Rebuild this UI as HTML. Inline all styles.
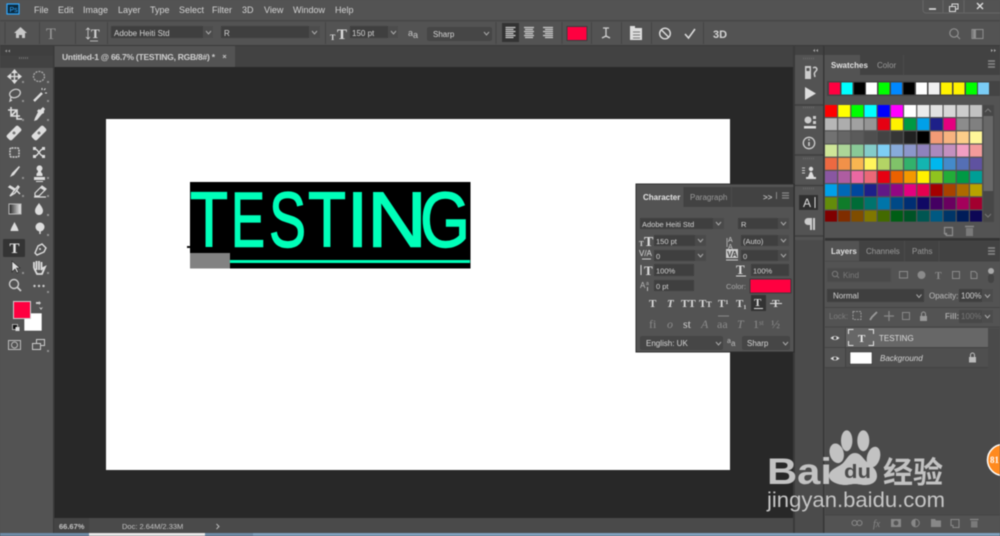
<!DOCTYPE html>
<html><head><meta charset="utf-8"><style>
html,body{margin:0;padding:0;background:#535353;width:1000px;height:536px;overflow:hidden}
svg{display:block;filter:blur(.5px)}
text{font-family:"Liberation Sans","Noto Sans CJK SC",sans-serif;font-size:8.5px;fill:#d4d4d4}
.f{fill:#3f3f3f}.i{fill:#cfcfcf}.s{stroke:#cfcfcf;fill:none;stroke-width:1.3}
.d{stroke:#aaa;fill:none;stroke-width:1}
.t{font-family:"Liberation Serif",serif;font-size:11px;font-weight:bold;fill:#ddd}
.g{font-family:"Liberation Serif",serif;font-size:12px;fill:#8a8a8a}
.big{font-size:78px;fill:#00ffb9;stroke:#00ffb9;stroke-width:1.4}
</style></head><body>
<svg width="1000" height="536" viewBox="0 0 1000 536" xmlns="http://www.w3.org/2000/svg">
<rect width="1000" height="536" fill="#535353"/>
<!-- menu -->
<rect x="7" y="4" width="12" height="10" fill="#0b2a3f" stroke="#31a8ff" stroke-width="1.2"/>
<text x="9.5" y="12" style="font-size:7px;fill:#31a8ff">Ps</text>
<text x="34" y="13" style="font-size:9px">File</text>
<text x="58" y="13" style="font-size:9px">Edit</text>
<text x="83" y="13" style="font-size:9px">Image</text>
<text x="118" y="13" style="font-size:9px">Layer</text>
<text x="150" y="13" style="font-size:9px">Type</text>
<text x="179" y="13" style="font-size:9px">Select</text>
<text x="212" y="13" style="font-size:9px">Filter</text>
<text x="242" y="13" style="font-size:9px">3D</text>
<text x="264" y="13" style="font-size:9px">View</text>
<text x="293" y="13" style="font-size:9px">Window</text>
<text x="335" y="13" style="font-size:9px">Help</text>
<path d="M923 0V10a3 3 0 0 0 3 3H1000" fill="none" stroke="#666"/><path d="M943 0V13M964 0V13" stroke="#666"/>
<path d="M929 9h7" stroke="#ddd" stroke-width="1.6"/>
<rect x="949.5" y="6.5" width="6" height="5" fill="none" stroke="#ddd"/><path d="M952 6V4h6v5h-2" fill="none" stroke="#ddd"/>
<path d="M977 3l6 6M983 3l-6 6" stroke="#ddd" stroke-width="1.4"/>
<!-- options -->
<rect y="20" width="1000" height="1.5" fill="#474747"/>
<rect y="45" width="1000" height="1.5" fill="#3a3a3a"/>
<path d="M5 22v22M39.5 22v22M75.5 22v22M107.5 22v22M325.5 22v22M496 22v22M562 22v22M591.5 22v22M621.5 22v22M651.5 22v22M703.5 22v22" stroke="#444"/>
<path d="M14 33l6.5-6 6.5 6h-2v5h-3v-3h-3v3h-3v-5z" fill="#c8c8c8"/>
<text x="46" y="39" style="font-family:'Liberation Serif';font-size:16px;fill:#999">T</text>
<text x="91" y="38" style="font-family:'Liberation Serif';font-size:13px;font-weight:bold;fill:#d4d4d4">T</text><path d="M88 28v11M86 30l2-2 2 2M86 37l2 2 2-2M90 41h8" stroke="#d4d4d4" fill="none" stroke-width=".8"/>
<rect x="111" y="26" width="102" height="12" rx="1" class="f"/><rect x="203" y="26" width="10" height="12" fill="#4c4c4c"/>
<text x="114" y="36" style="font-size:8px">Adobe Heiti Std</text><path d="M206 31l2.5 3 2.5-3" class="d"/>
<rect x="221" y="26" width="88" height="12" class="f"/><rect x="309" y="26" width="11" height="12" fill="#4c4c4c"/><text x="224" y="36" style="font-size:8px">R</text><path d="M312 31l2.5 3 2.5-3" class="d"/>
<text x="337" y="39" style="font-family:'Liberation Serif';font-size:15px;font-weight:bold;fill:#ddd">T</text><text x="330" y="40" style="font-family:'Liberation Serif';font-size:8px;font-weight:bold;fill:#ddd">T</text>
<rect x="350" y="26" width="38" height="12" class="f"/><rect x="388" y="26" width="10" height="12" fill="#4c4c4c"/><text x="352" y="36" style="font-size:8px">150 pt</text><path d="M391 31l2.5 3 2.5-3" class="d"/>
<text x="408" y="36" style="font-size:9px;fill:#c4c4c4">a</text><text x="413" y="38" style="font-size:9px;fill:#c4c4c4">a</text>
<rect x="427" y="27" width="65" height="14" rx="2" fill="#464646"/><text x="433" y="37" style="font-size:8px">Sharp</text><path d="M484 32l2.5 3 2.5-3" class="d"/>
<rect x="502" y="23" width="17" height="19" fill="#333"/>
<path d="M505.5 27.5h10M505.5 29.5h8M505.5 31.5h10M505.5 33.5h8M505.5 35.5h10M505.5 37.5h8" stroke="#ccc" stroke-width="1.2"/>
<path d="M524 27.5h10M525 29.5h8M524 31.5h10M525 33.5h8M524 35.5h10M525 37.5h8" stroke="#ccc" stroke-width="1.2"/>
<path d="M543 27.5h10M545 29.5h8M543 31.5h10M545 33.5h8M543 35.5h10M545 37.5h8" stroke="#ccc" stroke-width="1.2"/>
<rect x="567" y="26.5" width="20" height="14" fill="#ff0040" stroke="#3d3d3d"/>
<path d="M603 28h6M606 28v9M602 38l4-2 4 2" class="s"/>
<rect x="630" y="28" width="12" height="12" fill="#ddd"/><rect x="630" y="26" width="5" height="3" fill="#ddd"/><path d="M633 32h7M633 35h7M633 38h7" stroke="#777"/>
<circle cx="665" cy="33.5" r="5.3" fill="none" stroke="#ddd" stroke-width="1.4"/><path d="M661.5 30l7 7" stroke="#ddd" stroke-width="1.4"/>
<path d="M685 34l3.5 4 6.5-9" fill="none" stroke="#ddd" stroke-width="1.5"/>
<text x="713" y="38" style="font-size:11px;font-weight:bold;fill:#d4d4d4">3D</text>
<circle cx="954" cy="33" r="4.2" fill="none" stroke="#8f8f8f" stroke-width="1.2"/><path d="M957 36l3 3" stroke="#8f8f8f" stroke-width="1.2"/>
<rect x="972" y="29.5" width="11" height="9" fill="none" stroke="#8f8f8f"/><rect x="973" y="30" width="3" height="8" fill="#8f8f8f"/>
<!-- tab row -->
<rect y="46" width="793" height="22" fill="#424242"/>
<rect x="54" y="46" width="181" height="22" fill="#535353"/>
<text x="62" y="60" style="font-size:8.5px;font-weight:bold;fill:#d0d0d0" textLength="153">Untitled-1 @ 66.7% (TESTING, RGB/8#) *</text>
<path d="M223 55l3 3M226 55l-3 3" stroke="#bbb"/>
<!-- canvas -->
<rect x="54" y="67" width="739" height="451" fill="#282828"/>
<rect x="106" y="119" width="624" height="351" fill="#fff"/>
<rect x="190" y="182" width="280.5" height="86.5" fill="#000"/>
<text class="big" x="190" y="246.5" textLength="38" lengthAdjust="spacingAndGlyphs">T</text>
<text class="big" x="231" y="246.5" textLength="34" lengthAdjust="spacingAndGlyphs">E</text>
<text class="big" x="269" y="246.5" textLength="37" lengthAdjust="spacingAndGlyphs">S</text>
<text class="big" x="308" y="246.5" textLength="38" lengthAdjust="spacingAndGlyphs">T</text>
<text class="big" x="346.5" y="246.5" textLength="22" lengthAdjust="spacingAndGlyphs">I</text>
<text class="big" x="367" y="246.5" textLength="60" lengthAdjust="spacingAndGlyphs">N</text>
<text class="big" x="420" y="246.5" textLength="50" lengthAdjust="spacingAndGlyphs">G</text>
<rect x="190" y="253" width="40" height="15.5" fill="#828282"/>
<rect x="230" y="260" width="240" height="3" fill="#00ffb9"/>
<rect x="187" y="246" width="3" height="2" fill="#111"/>
<!-- left toolbar -->
<rect width="54" height="9.5" y="46" fill="#3f3f3f"/><rect x="53" y="46" width="1.5" height="490" fill="#3a3a3a"/>
<path d="M5 51l2-1.5v3zM8 51l2-1.5v3z" fill="#999"/>
<path d="M19 58h10" stroke="#6d6d6d" stroke-width="2" stroke-dasharray="1 1"/>
<g fill="#8f8f8f"><path d="M22 81h2v2h-2zM47 81h2v2h-2zM22 100h2v2h-2zM47 100h2v2h-2zM22 119h2v2h-2zM47 119h2v2h-2zM22 177h2v2h-2zM47 177h2v2h-2zM22 195h2v2h-2zM47 195h2v2h-2zM47 214h2v2h-2zM47 234h2v2h-2zM22 253h2v2h-2zM22 272h2v2h-2zM47 272h2v2h-2zM47 291h2v2h-2zM47 350h2v2h-2z"/></g>
<!-- row 1 -->
<path d="M14.5 71v11M9 76.5h11M14.5 70l-2 2.5h4zM14.5 83l-2-2.5h4zM8 76.5l2.5-2v4zM21 76.5l-2.5-2v4z" fill="#ddd" stroke="#ddd" stroke-width="1.3"/>
<ellipse cx="39" cy="76.5" rx="5.5" ry="5" fill="none" stroke="#aaa" stroke-width="1.3" stroke-dasharray="2 1"/>
<ellipse cx="15" cy="93.5" rx="5.5" ry="4" fill="none" stroke="#ccc" stroke-width="1.3" transform="rotate(-20 15 93.5)"/><path d="M11 97l-1 4 2-1" class="s"/>
<path d="M34 101l8-8" stroke="#ddd" stroke-width="2.4"/><path d="M42 88v2M45 93h2M44 90l1.5-1.5" stroke="#ddd"/>
<path d="M8 110h9v9h5M11 107v9h9M17 110l-6 6" fill="none" stroke="#ddd" stroke-width="1.6"/>
<path d="M35 118l-1 3 3-1 5-6 2-1v-2l1-2-2-2-3 3-1-1-2 2 1 1z" fill="#ddd"/>
<g transform="rotate(-45 14 133)"><rect x="6" y="129.5" width="16" height="7" rx="2" fill="#ddd"/><circle cx="14" cy="133" r="1.5" fill="#777"/></g>
<g transform="rotate(-45 39 133)"><rect x="31" y="129.5" width="16" height="7" rx="2" fill="#ddd"/><circle cx="39" cy="133" r="1.5" fill="#777"/></g>
<rect x="10" y="148" width="9" height="9" rx="1.5" fill="#555" stroke="#ccc" stroke-width="1.5" stroke-dasharray="2 .8"/>
<path d="M34 148l3 2 4 5 3 2M44 148l-3 2-4 5-3 2" fill="none" stroke="#ddd" stroke-width="1.4"/><rect x="33" y="147" width="3" height="3" fill="#ddd"/><rect x="42" y="147" width="3" height="3" fill="#ddd"/><rect x="33" y="155" width="3" height="3" fill="#ddd"/><rect x="42" y="155" width="3" height="3" fill="#ddd"/>
<path d="M10 177l2-4 7-7 1 1-6 8z" fill="#ddd"/>
<path d="M36.5 176v-2c0-1 1.5-1 1.5-3a3 3 0 1 1 3 0c0 2 1.5 2 1.5 3v2zM34 177h11v3H34zM36 181h7v1h-7z" fill="#ddd"/>
<path d="M10 196l3-4 5-6 1 1-4 6zM9 187l5 3 1-1-5-3zM17 191l3 3" fill="none" stroke="#ddd" stroke-width="1.4"/>
<path d="M35 193l7-7 4 3-7 7h-4zM34 197h12" fill="none" stroke="#ddd" stroke-width="1.2"/><path d="M40 188l5 3 1.5-2-4-3z" fill="#ddd"/>
<defs><linearGradient id="gr"><stop offset="0" stop-color="#222"/><stop offset="1" stop-color="#eee"/></linearGradient></defs>
<rect x="9" y="204" width="12" height="10" fill="url(#gr)" stroke="#bbb"/>
<path d="M39 203c2 3 4 5 4 8a4 4 0 0 1-8 0c0-3 2-5 4-8z" fill="#ddd"/>
<path d="M14.5 222c1 2 4 7 4 9h-8c0-2 3-7 4-9z" fill="#ddd"/>
<circle cx="40" cy="227" r="4.5" fill="#ddd"/><path d="M40 231v3" stroke="#ddd" stroke-width="1.5"/>
<rect x="3" y="239" width="22" height="18" rx="1" fill="#343434"/>
<text x="9.5" y="253" style="font-family:'Liberation Serif';font-size:15px;font-weight:bold;fill:#e4e4e4">T</text>
<path d="M35 253l3-7 4-2 4 4-2 4-7 3z" fill="none" stroke="#ddd" stroke-width="1.4"/><circle cx="40" cy="249" r="1" fill="#ddd"/>
<path d="M12 261l0 11 3-3 2 4 1.5-1-2-4h3.5z" fill="#ddd" stroke="#222" stroke-width=".6"/>
<path d="M34 268v-6M36.5 270v-9M39 270v-9M41.5 270v-8M34 268l3 6h5l3-7-2 1-2 2" fill="none" stroke="#ddd" stroke-width="1.8"/>
<circle cx="14" cy="284" r="4.5" fill="none" stroke="#ccc" stroke-width="1.4"/><path d="M17 287l4 4" stroke="#ccc" stroke-width="1.8"/>
<circle cx="34.5" cy="286" r="1.2" fill="#ccc"/><circle cx="39" cy="286" r="1.2" fill="#ccc"/><circle cx="43.5" cy="286" r="1.2" fill="#ccc"/>
<rect x="24" y="313" width="18" height="18" fill="#fff" stroke="#3a3a3a" stroke-width=".5"/>
<rect x="13.5" y="301.5" width="17" height="17" fill="#ff0040" stroke="#cfcfcf"/>
<path d="M36 302h3v-1l2 2-2 2v-1h-3zM41 304v4l2-1-2 3-2-3 2 1" fill="#ccc"/>
<rect x="12.5" y="324.5" width="5" height="5" fill="#111" stroke="#ddd" stroke-width=".7"/><rect x="15.5" y="327" width="4" height="4" fill="#ddd"/>
<rect x="8.5" y="340.5" width="12" height="9" fill="none" stroke="#bbb"/><circle cx="14.5" cy="345" r="3" fill="none" stroke="#bbb"/>
<rect x="36.5" y="339.5" width="8" height="6" fill="none" stroke="#ccc"/><rect x="32.5" y="343.5" width="8" height="6" fill="#555" stroke="#ccc"/>
<!-- status -->
<rect x="54" y="518" width="739" height="15" fill="#4a4a4a"/>
<rect y="518" width="35" height="15" fill="#444" x="54"/>
<text x="59" y="529" style="font-size:7.5px;font-weight:bold;fill:#c4c4c4">66.67%</text>
<text x="122" y="529" style="font-size:7.5px;fill:#c4c4c4">Doc: 2.64M/2.33M</text>
<path d="M216.5 524l2.5 2.5-2.5 2.5" fill="none" stroke="#bbb"/>
<rect y="533" width="1000" height="3" fill="#6d8aa5"/><rect x="89" y="533" width="116" height="3" fill="#e8e8e8"/><rect x="253" y="533" width="747" height="3" fill="#7fa0bd"/>
<!-- dock -->
<rect x="793" y="46" width="2" height="487" fill="#3a3a3a"/>
<rect x="795" y="46" width="28" height="9" fill="#424242"/><rect x="823" y="46" width="1.5" height="487" fill="#373737"/><rect x="824.5" y="46" width="175.5" height="9" fill="#424242"/>
<path d="M813 50.5l2-1.5v3zM816 50.5l2-1.5v3zM991 49v3l2-1.5zM994 49v3l2-1.5z" fill="#aaa"/>
<path d="M803 58.5h12M803 107.5h12M803 158.5h12M803 188.5h12" stroke="#666" stroke-width="2" stroke-dasharray="1 1"/>
<path d="M795 105h28M795 155h28M795 185.5h28M795 236h28" stroke="#3b3b3b" stroke-width="1.3"/>
<rect x="805" y="66" width="6" height="13" fill="#ccc"/><rect x="806.5" y="68" width="3" height="3" fill="#555"/><path d="M813 68c3-2 5 1 3 3s-2 2-1 6" fill="none" stroke="#ccc" stroke-width="1.5"/>
<path d="M805 87l11 6.5-11 6.5z" fill="#ddd"/>
<circle cx="808" cy="120" r="3.5" fill="#ccc"/><rect x="813" y="116" width="3" height="3" fill="#ccc"/><rect x="813" y="121" width="3" height="3" fill="#ccc"/><rect x="804" y="126" width="12" height="2.5" fill="#ddd"/>
<circle cx="809" cy="143" r="5.7" fill="none" stroke="#ccc" stroke-width="1.3"/><path d="M809 142v4" stroke="#ccc" stroke-width="1.6"/><circle cx="809" cy="139.8" r=".9" fill="#ccc"/>
<path d="M802 168h3M802 170.5h3M802 173h3" stroke="#ccc"/><circle cx="811" cy="169" r="2.2" fill="#ddd"/><path d="M808 177l2-5h2l2 5zM806 177h10v2h-10z" fill="#ddd"/>
<rect x="799" y="195" width="19" height="15" fill="#303030"/><text x="803" y="207" style="font-size:12px;fill:#ddd">A</text><path d="M815 197v11" stroke="#ddd"/>
<path d="M812 218h-4a3.5 3.5 0 0 0 0 7h2v5h2v-12zM813 218h2v12h-2z" fill="#ccc"/>
<!-- swatches -->
<rect x="825" y="55" width="175" height="20" fill="#424242"/><rect x="825" y="55" width="35" height="20" fill="#535353"/><path d="M903.5 55v20" stroke="#4a4a4a"/>
<text x="831" y="68" style="font-size:8px;font-weight:bold;fill:#e2e2e2">Swatches</text><text x="877" y="68" style="font-size:8px;fill:#9a9a9a">Color</text>
<path d="M988 61h7M988 64h7M988 67h7" stroke="#888" stroke-width="1.5"/>
<rect x="827" y="81" width="173" height="15" fill="#444"/>
<g>
<rect x="829" y="82.5" width="11" height="12" fill="#ff0040"/><rect x="841.5" y="82.5" width="11" height="12" fill="#00ffff"/><rect x="854" y="82.5" width="11" height="12" fill="#000"/><rect x="866" y="82.5" width="11" height="12" fill="#fff"/><rect x="878.5" y="82.5" width="11" height="12" fill="#00ff00"/><rect x="891" y="82.5" width="11" height="12" fill="#0088ff"/><rect x="903.5" y="82.5" width="11" height="12" fill="#000"/><rect x="916" y="82.5" width="11" height="12" fill="#fff"/><rect x="928.5" y="82.5" width="11" height="12" fill="#f0f0f0"/><rect x="941" y="82.5" width="11" height="12" fill="#fff200"/><rect x="953.5" y="82.5" width="11" height="12" fill="#fff200"/><rect x="966" y="82.5" width="11" height="12" fill="#00ff00"/><rect x="978" y="82.5" width="11" height="12" fill="#7accf5"/>
</g>
<g transform="translate(825 105)"><rect x="0" width="12" height="12" fill="#ff0000"/><rect x="13.2" width="12" height="12" fill="#ffff00"/><rect x="26.4" width="12" height="12" fill="#00ff00"/><rect x="39.5" width="12" height="12" fill="#00ffff"/><rect x="52.7" width="12" height="12" fill="#0000ff"/><rect x="65.9" width="12" height="12" fill="#ff00ff"/><rect x="79.1" width="12" height="12" fill="#ffffff"/><rect x="92.3" width="12" height="12" fill="#ebebeb"/><rect x="105.5" width="12" height="12" fill="#e1e1e1"/><rect x="118.6" width="12" height="12" fill="#d7d7d7"/><rect x="131.8" width="12" height="12" fill="#cccccc"/><rect x="145" width="12" height="12" fill="#c2c2c2"/></g>
<g transform="translate(825 118.2)"><rect x="0" width="12" height="12" fill="#b7b7b7"/><rect x="13.2" width="12" height="12" fill="#adadad"/><rect x="26.4" width="12" height="12" fill="#a1a1a1"/><rect x="39.5" width="12" height="12" fill="#959595"/><rect x="52.7" width="12" height="12" fill="#e60012"/><rect x="65.9" width="12" height="12" fill="#fff100"/><rect x="79.1" width="12" height="12" fill="#009944"/><rect x="92.3" width="12" height="12" fill="#00a0e9"/><rect x="105.5" width="12" height="12" fill="#1d2088"/><rect x="118.6" width="12" height="12" fill="#e5007f"/><rect x="131.8" width="12" height="12" fill="#8c8c8c"/><rect x="145" width="12" height="12" fill="#808080"/></g>
<g transform="translate(825 131.4)"><rect x="0" width="12" height="12" fill="#727272"/><rect x="13.2" width="12" height="12" fill="#666666"/><rect x="26.4" width="12" height="12" fill="#5b5b5b"/><rect x="39.5" width="12" height="12" fill="#4f4f4f"/><rect x="52.7" width="12" height="12" fill="#434343"/><rect x="65.9" width="12" height="12" fill="#363636"/><rect x="79.1" width="12" height="12" fill="#212121"/><rect x="92.3" width="12" height="12" fill="#000000"/><rect x="105.5" width="12" height="12" fill="#f29b76"/><rect x="118.6" width="12" height="12" fill="#f7b37f"/><rect x="131.8" width="12" height="12" fill="#fbcd89"/><rect x="145" width="12" height="12" fill="#fff799"/></g>
<g transform="translate(825 144.6)"><rect x="0" width="12" height="12" fill="#cfe698"/><rect x="13.2" width="12" height="12" fill="#acd598"/><rect x="26.4" width="12" height="12" fill="#89c997"/><rect x="39.5" width="12" height="12" fill="#84ccc9"/><rect x="52.7" width="12" height="12" fill="#7ecef4"/><rect x="65.9" width="12" height="12" fill="#88abda"/><rect x="79.1" width="12" height="12" fill="#8c97cb"/><rect x="92.3" width="12" height="12" fill="#8f82bc"/><rect x="105.5" width="12" height="12" fill="#aa89bd"/><rect x="118.6" width="12" height="12" fill="#c490bf"/><rect x="131.8" width="12" height="12" fill="#f19ec2"/><rect x="145" width="12" height="12" fill="#f29b9b"/></g>
<g transform="translate(825 157.8)"><rect x="0" width="12" height="12" fill="#ec6941"/><rect x="13.2" width="12" height="12" fill="#f19149"/><rect x="26.4" width="12" height="12" fill="#f8b551"/><rect x="39.5" width="12" height="12" fill="#fff45c"/><rect x="52.7" width="12" height="12" fill="#b3d465"/><rect x="65.9" width="12" height="12" fill="#80c269"/><rect x="79.1" width="12" height="12" fill="#32b16c"/><rect x="92.3" width="12" height="12" fill="#13b5b1"/><rect x="105.5" width="12" height="12" fill="#00b7ee"/><rect x="118.6" width="12" height="12" fill="#448aca"/><rect x="131.8" width="12" height="12" fill="#556fb5"/><rect x="145" width="12" height="12" fill="#5f52a0"/></g>
<g transform="translate(825 171)"><rect x="0" width="12" height="12" fill="#8957a1"/><rect x="13.2" width="12" height="12" fill="#ae5da1"/><rect x="26.4" width="12" height="12" fill="#ea68a2"/><rect x="39.5" width="12" height="12" fill="#eb6877"/><rect x="52.7" width="12" height="12" fill="#e60012"/><rect x="65.9" width="12" height="12" fill="#eb6100"/><rect x="79.1" width="12" height="12" fill="#f39800"/><rect x="92.3" width="12" height="12" fill="#fff100"/><rect x="105.5" width="12" height="12" fill="#8fc31f"/><rect x="118.6" width="12" height="12" fill="#22ac38"/><rect x="131.8" width="12" height="12" fill="#009944"/><rect x="145" width="12" height="12" fill="#009e96"/></g>
<g transform="translate(825 184.2)"><rect x="0" width="12" height="12" fill="#00a0e9"/><rect x="13.2" width="12" height="12" fill="#0068b7"/><rect x="26.4" width="12" height="12" fill="#00479d"/><rect x="39.5" width="12" height="12" fill="#1d2088"/><rect x="52.7" width="12" height="12" fill="#601986"/><rect x="65.9" width="12" height="12" fill="#920783"/><rect x="79.1" width="12" height="12" fill="#e4007f"/><rect x="92.3" width="12" height="12" fill="#e5004f"/><rect x="105.5" width="12" height="12" fill="#a40000"/><rect x="118.6" width="12" height="12" fill="#a84200"/><rect x="131.8" width="12" height="12" fill="#ad6a00"/><rect x="145" width="12" height="12" fill="#b8a200"/></g>
<g transform="translate(825 197.4)"><rect x="0" width="12" height="12" fill="#638c0b"/><rect x="13.2" width="12" height="12" fill="#0f7c2a"/><rect x="26.4" width="12" height="12" fill="#006b37"/><rect x="39.5" width="12" height="12" fill="#00736d"/><rect x="52.7" width="12" height="12" fill="#0075a9"/><rect x="65.9" width="12" height="12" fill="#004986"/><rect x="79.1" width="12" height="12" fill="#002e73"/><rect x="92.3" width="12" height="12" fill="#100964"/><rect x="105.5" width="12" height="12" fill="#440062"/><rect x="118.6" width="12" height="12" fill="#6a005f"/><rect x="131.8" width="12" height="12" fill="#a4005b"/><rect x="145" width="12" height="12" fill="#a2002f"/></g>
<g transform="translate(825 210.6)"><rect x="0" width="12" height="11" fill="#7f0000"/><rect x="13.2" width="12" height="11" fill="#7f2d00"/><rect x="26.4" width="12" height="11" fill="#7f4d00"/><rect x="39.5" width="12" height="11" fill="#807700"/><rect x="52.7" width="12" height="11" fill="#436a00"/><rect x="65.9" width="12" height="11" fill="#005e15"/><rect x="79.1" width="12" height="11" fill="#005326"/><rect x="92.3" width="12" height="11" fill="#005652"/><rect x="105.5" width="12" height="11" fill="#005982"/><rect x="118.6" width="12" height="11" fill="#003567"/><rect x="131.8" width="12" height="11" fill="#001c58"/><rect x="145" width="12" height="11" fill="#0d0755"/></g>
<rect x="983" y="105" width="11" height="117" fill="#474747"/><rect x="983.5" y="116" width="9.5" height="75" fill="#686868"/>
<path d="M985 112l3-3 3 3M985 214l3 3 3-3" fill="none" stroke="#777"/>
<path d="M944.5 227.5h8v8h-6v-2h-2zM946 235l-2-2" fill="none" stroke="#8d8d8d" stroke-width="1.2"/>
<rect x="966" y="228" width="7" height="8" fill="#7a7a7a"/><path d="M965 226.5h9" stroke="#888" stroke-width="1.5"/>
<rect x="825" y="238" width="175" height="2.5" fill="#333"/>
<!-- layers -->
<rect x="825" y="240.5" width="175" height="21" fill="#424242"/><rect x="825" y="241" width="34" height="20" fill="#535353"/><path d="M904.5 241v20M939 241v20" stroke="#4a4a4a"/>
<text x="831" y="254" style="font-size:8px;font-weight:bold;fill:#e2e2e2">Layers</text><text x="866" y="254" style="font-size:8px;fill:#9a9a9a">Channels</text><text x="912" y="254" style="font-size:8px;fill:#9a9a9a">Paths</text>
<path d="M988 248h7M988 251h7M988 254h7" stroke="#888" stroke-width="1.5"/>
<rect x="827" y="268" width="64" height="14" rx="1" fill="#4a4a4a" stroke="#505050"/>
<circle cx="835" cy="274" r="2.7" fill="none" stroke="#7a7a7a"/><path d="M837 276l2 2" stroke="#7a7a7a"/>
<text x="843" y="278" style="font-size:8px;fill:#7a7a7a">Kind</text>
<g fill="none" stroke="#8a8a8a"><rect x="899.5" y="271.5" width="8" height="6.5"/><circle cx="921.5" cy="275" r="3.5" fill="#8a8a8a"/><rect x="952.5" y="271.5" width="7" height="7"/><path d="M971 271.5h4l2 2v5h-6z"/></g>
<text x="935" y="279" style="font-family:'Liberation Serif';font-size:10px;font-weight:bold;fill:#8a8a8a">T</text>
<circle cx="991" cy="271" r="3" fill="#a8a8a8"/><rect x="988" y="274" width="6" height="9" rx="3" fill="#444"/>
<rect x="827" y="289" width="97" height="13" fill="#3f3f3f"/><text x="833" y="298.5" style="font-size:8px">Normal</text><path d="M916.5 294.5l2.5 3 2.5-3" class="d"/>
<text x="929" y="298.5" style="font-size:8px;fill:#bdbdbd">Opacity:</text>
<rect x="959" y="289" width="23" height="13" fill="#3f3f3f"/><rect x="982" y="289" width="11" height="13" fill="#4c4c4c"/><text x="961" y="298.5" style="font-size:8px">100%</text><path d="M985 294.5l2.5 3 2.5-3" class="d"/>
<path d="M825 307.5h175M825 327h175" stroke="#444"/>
<text x="829" y="319" style="font-size:8px;fill:#7c7c7c">Lock:</text>
<rect x="853" y="311.5" width="8" height="8" fill="none" stroke="#999" stroke-dasharray="2 1"/>
<path d="M870 320l2-3 5-5" stroke="#999" stroke-width="1.8" fill="none"/>
<path d="M889 311v10M884 316h10" stroke="#888" stroke-width="1.3"/>
<rect x="902.5" y="312.5" width="7" height="7" fill="none" stroke="#888"/><rect x="920" y="316" width="7" height="5" fill="#999"/><path d="M921.5 316v-2a2 2 0 0 1 4 0v2" fill="none" stroke="#999"/>
<text x="945" y="319" style="font-size:8px;font-weight:bold;fill:#a8a8a8">Fill:</text>
<rect x="959" y="310" width="23" height="13" fill="#484848"/><rect x="982" y="310" width="11" height="13" fill="#4c4c4c"/><text x="961" y="319" style="font-size:8px;fill:#777">100%</text><path d="M985 315l2.5 3 2.5-3" class="d"/>
<rect x="846" y="328" width="142" height="19" fill="#676767"/>
<rect x="846" y="348" width="142" height="19" fill="#4f4f4f"/>
<path d="M825 347.5h163M825 367.5h163" stroke="#434343"/><path d="M845.5 328v39" stroke="#434343"/><rect x="988" y="328" width="12" height="187" fill="#4a4a4a"/>
<path d="M830.5 338q4.5-4 9 0q-4.5 4-9 0z" fill="#ddd"/><circle cx="835" cy="338" r="1.5" fill="#444"/>
<path d="M830.5 358.5q4.5-4 9 0q-4.5 4-9 0z" fill="#ddd"/><circle cx="835" cy="358.5" r="1.5" fill="#444"/>
<path d="M848.5 334v-4.5h5M868.5 329.5h5v4.5M873.5 341v4.5h-5M853.5 345.5h-5v-4.5" fill="none" stroke="#e6e6e6"/>
<text x="858" y="342" style="font-family:'Liberation Serif';font-size:11px;font-weight:bold;fill:#eee">T</text>
<text x="879" y="341" style="font-size:8px;fill:#dcdcdc">TESTING</text>
<rect x="850" y="352" width="22" height="12" fill="#fff" stroke="#222" stroke-width=".5"/>
<text x="880" y="361" style="font-size:8px;font-style:italic;fill:#d4d4d4">Background</text>
<rect x="969" y="357" width="7" height="5.5" fill="#bbb"/><path d="M970.5 357v-2a2 2 0 0 1 4 0v2" fill="none" stroke="#bbb"/>
<rect x="825" y="368" width="175" height="147" fill="#4a4a4a"/><rect x="795" y="240" width="28" height="293" fill="#4b4b4b"/>
<rect x="825" y="515" width="175" height="17.5" fill="#535353"/><path d="M825 515h175" stroke="#444"/>
<g fill="none" stroke="#888" stroke-width="1.1"><circle cx="854.5" cy="523" r="2.5"/><circle cx="859.5" cy="523" r="2.5"/><path d="M951 519.5h8v8h-6v-2h-2z"/></g>
<text x="873" y="527" style="font-family:'Liberation Serif';font-size:10px;font-style:italic;fill:#888">fx</text>
<rect x="891" y="519" width="10" height="8" fill="#888"/><circle cx="896" cy="523" r="2.4" fill="#555"/>
<circle cx="915.5" cy="523" r="3.8" fill="none" stroke="#888"/><path d="M915.5 519.5a3.5 3.5 0 0 0 0 7z" fill="#888"/>
<path d="M931 519h4l1 1.5h5v6.5h-10z" fill="#888"/>
<rect x="971" y="521" width="6.5" height="6.5" fill="#7a7a7a"/><path d="M970 519.5h8.5" stroke="#888" stroke-width="1.3"/>
<!-- character panel -->
<rect x="636" y="184" width="158" height="168" fill="#535353" stroke="#2e2e2e"/>
<rect x="636.5" y="187" width="157" height="20" fill="#424242"/><rect x="636.5" y="187" width="47" height="20" fill="#535353"/><path d="M731.5 187v20" stroke="#4a4a4a"/>
<text x="643" y="200" style="font-size:8px;font-weight:bold;fill:#e4e4e4">Character</text><text x="690" y="200" style="font-size:8px;fill:#9a9a9a">Paragraph</text>
<text x="763" y="200" style="font-size:8px;font-weight:bold;fill:#bbb">&gt;&gt;</text><path d="M776.5 192v7" stroke="#888"/><path d="M782 193h7M782 195.5h7M782 198h7" stroke="#888" stroke-width="1.2"/>
<rect x="640" y="218" width="73" height="11" fill="#3f3f3f"/><rect x="713" y="218" width="11" height="11" fill="#4a4a4a"/><text x="642" y="227" style="font-size:7.5px">Adobe Heiti Std</text><path d="M716 222l2.5 3 2.5-3" class="d"/>
<rect x="738" y="218" width="40" height="11" fill="#3f3f3f"/><rect x="778" y="218" width="11" height="11" fill="#4a4a4a"/><text x="741" y="227" style="font-size:7.5px">R</text><path d="M781 222l2.5 3 2.5-3" class="d"/>
<rect x="654" y="235" width="41" height="11" fill="#3f3f3f"/><rect x="695" y="235" width="11" height="11" fill="#4a4a4a"/><text x="656" y="244" style="font-size:7.5px">150 pt</text><path d="M698 239l2.5 3 2.5-3" class="d"/>
<rect x="741" y="235" width="37" height="11" fill="#3f3f3f"/><rect x="778" y="235" width="11" height="11" fill="#4a4a4a"/><text x="743" y="244" style="font-size:7.5px">(Auto)</text><path d="M781 239l2.5 3 2.5-3" class="d"/>
<rect x="654" y="250" width="41" height="11" fill="#3f3f3f"/><rect x="695" y="250" width="11" height="11" fill="#4a4a4a"/><text x="656" y="259" style="font-size:7.5px">0</text><path d="M698 254l2.5 3 2.5-3" class="d"/>
<rect x="741" y="250" width="37" height="11" fill="#3f3f3f"/><rect x="778" y="250" width="11" height="11" fill="#4a4a4a"/><text x="743" y="259" style="font-size:7.5px">0</text><path d="M781 254l2.5 3 2.5-3" class="d"/>
<rect x="654" y="264" width="40" height="12" fill="#3f3f3f"/><text x="656" y="273.5" style="font-size:7.5px">100%</text>
<rect x="751" y="264" width="38" height="12" fill="#3f3f3f"/><text x="753" y="273.5" style="font-size:7.5px">100%</text>
<rect x="654" y="280" width="40" height="11" fill="#3f3f3f"/><text x="656" y="289" style="font-size:7.5px">0 pt</text>
<text x="726" y="289" style="font-size:7.5px;fill:#a8a8a8">Color:</text>
<rect x="750" y="279" width="41" height="14" fill="#ff0040" stroke="#3b3b3b"/>
<text x="644" y="246" style="font-family:'Liberation Serif';font-size:14px;font-weight:bold;fill:#ddd">T</text><text x="639" y="246" style="font-family:'Liberation Serif';font-size:7px;font-weight:bold;fill:#ddd">T</text>
<text x="728" y="242" style="font-size:7px;fill:#ccc">A</text><text x="728" y="249" style="font-size:7px;fill:#ccc">A</text><path d="M727 238v9" stroke="#ccc" stroke-width=".7"/>
<text x="639" y="256" style="font-size:8px;fill:#ddd">V/A</text><path d="M642 259h9" stroke="#ccc"/>
<rect x="726" y="249" width="12" height="9" fill="#ccc"/><text x="727" y="257" style="font-size:8px;font-weight:bold;fill:#444">VA</text><path d="M726 260h12" stroke="#ccc"/>
<text x="644" y="275" style="font-family:'Liberation Serif';font-size:13px;font-weight:bold;fill:#ddd">T</text><path d="M641 265v10" stroke="#ddd"/>
<text x="736" y="274" style="font-family:'Liberation Serif';font-size:13px;font-weight:bold;fill:#ddd">T</text><path d="M736 276h10" stroke="#ddd"/>
<text x="640" y="288" style="font-size:8px;fill:#bbb">A</text><text x="646" y="285" style="font-size:5px;fill:#bbb">a</text><path d="M647.5 287v4" stroke="#bbb"/>
<rect x="751" y="295" width="15" height="16" fill="#333"/>
<text x="649" y="307" class="t">T</text><text x="667" y="307" class="t" style="font-style:italic">T</text><text x="681" y="307" class="t">TT</text><text x="699" y="307" class="t">T<tspan style="font-size:8px">T</tspan></text><text x="718" y="307" class="t">T<tspan style="font-size:6px" dy="-3">1</tspan></text><text x="736" y="307" class="t">T<tspan style="font-size:6px" dy="2">1</tspan></text><text x="754" y="306" class="t">T</text><path d="M754 308.5h9" stroke="#ddd"/><text x="772" y="307" class="t">T</text><path d="M770 303.5h12" stroke="#ddd"/>
<text x="649" y="328" class="g">fi</text><text x="667" y="328" class="g" style="font-style:italic">o</text><text x="683" y="328" class="g" style="fill:#ccc">st</text><text x="701" y="328" class="g" style="font-style:italic">A</text><text x="717" y="328" class="g">aa</text><path d="M718 316h11" stroke="#8a8a8a"/><text x="737" y="328" class="g" style="font-style:italic">T</text><text x="753" y="328" class="g">1<tspan style="font-size:7px" dy="-3">st</tspan></text><text x="771" y="328" class="g">½</text>
<rect x="640" y="336" width="83" height="14" rx="2" fill="#464646"/><text x="646" y="346" style="font-size:8px">English: UK</text><path d="M716 342l2.5 3 2.5-3" class="d"/>
<text x="727" y="343" style="font-size:7px;fill:#bbb">a</text><text x="731" y="346" style="font-size:8px;fill:#bbb">a</text>
<rect x="742" y="336" width="48" height="14" rx="2" fill="#464646"/><text x="747" y="346" style="font-size:8px">Sharp</text><path d="M783 342l2.5 3 2.5-3" class="d"/>
<!-- watermark -->
<g fill="#c2c2c2">
<text x="767" y="484" textLength="65" lengthAdjust="spacingAndGlyphs" style="font-size:37px;font-weight:bold;fill:#c2c2c2">Bai</text>
<ellipse cx="846.7" cy="440.7" rx="5.7" ry="10.5"/><ellipse cx="863.3" cy="440.7" rx="6" ry="10.5"/><ellipse cx="836.7" cy="453.3" rx="7" ry="10" transform="rotate(-15 836.7 453.3)"/><ellipse cx="873.5" cy="457" rx="6.5" ry="10.5" transform="rotate(15 873.5 457)"/>
<path d="M855 453c6 0 8 6 13 10s9 7 9 13c0 7-7 9-12 9-4 0-6-1-10-1s-6 1-10 1c-6 0-16-3-16-9 0-7 10-9 14-13s6-10 12-10z"/>
</g>
<text x="844" y="478" textLength="27" lengthAdjust="spacingAndGlyphs" style="font-size:19px;font-weight:bold;fill:#4c4c4c">du</text>
<text x="883" y="483" textLength="60" style="font-size:30px;font-weight:bold;fill:#c2c2c2">经验</text>
<text x="767" y="507" textLength="178" lengthAdjust="spacingAndGlyphs" style="font-size:21px;fill:#c6c6c6">jingyan.baidu.com</text>
<circle cx="1003" cy="460" r="15.5" fill="#ff8a1f" stroke="#fff" stroke-width="1.5"/>
<text x="990" y="463" style="font-family:'Liberation Serif';font-size:9px;font-weight:bold;fill:#fff">81</text>
</svg>
</body></html>
